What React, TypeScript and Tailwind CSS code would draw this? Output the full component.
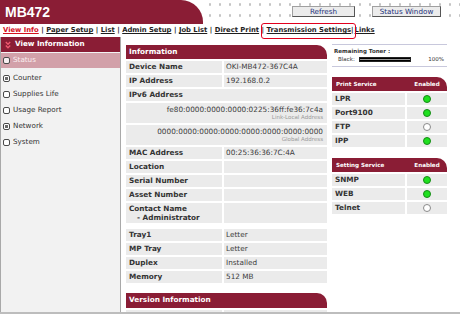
import React from 'react';

const MAROON = 'bg-[#8a1d35]';

const Chevron = () => (
  <svg width="6" height="8" viewBox="0 0 6 8" className="shrink-0">
    <polyline points="0.8,1 3,3.3 5.2,1" fill="none" stroke="#ef5a70" strokeWidth="1.3" />
    <polyline points="0.8,4.5 3,6.8 5.2,4.5" fill="none" stroke="#ef5a70" strokeWidth="1.3" />
  </svg>
);

const NodeIcon = ({ plus, light }: { plus?: boolean; light?: boolean }) => (
  <svg width="7" height="7" viewBox="0 0 7 7" className="shrink-0">
    <rect x="0.5" y="0.5" width="6" height="6" rx="1.5" fill={light ? '#f7eef0' : '#ffffff'} stroke="#4a4a4a" strokeWidth="1" />
    {plus && <rect x="2" y="2" width="3" height="3" fill="#6a6a6a" />}
  </svg>
);

const Dot = ({ on }: { on: boolean }) => (
  <span
    className={
      on
        ? 'block w-[8px] h-[8px] rounded-full bg-[#1fe01f] border border-[#178a17]'
        : 'block w-[8px] h-[8px] rounded-full bg-white border border-[#8a8a8a]'
    }
  />
);

const navItems = ['Paper Setup', 'List', 'Admin Setup', 'Job List', 'Direct Print'];

const sideItems = [
  { label: 'Counter', plus: true },
  { label: 'Supplies Life' },
  { label: 'Usage Report' },
  { label: 'Network', plus: true },
  { label: 'System' },
];

const Row = ({ label, value }: { label: string; value?: string }) => (
  <>
    <div className="h-[12px] bg-[#ebebeb] pl-[3px] leading-[12px] font-bold text-[#333] whitespace-nowrap">{label}</div>
    <div className="h-[12px] bg-[#ebebeb] pl-[2px] leading-[12px] text-[#3c3c3c] whitespace-nowrap">{value}</div>
  </>
);

const ServiceTable = ({ title, rows }: { title: string; rows: [string, boolean][] }) => (
  <div className="grid grid-cols-[73px_1fr] gap-[2px]">
    <div className={`col-span-2 h-[14px] ${MAROON} rounded-tr-[10px] grid grid-cols-[73px_1fr] gap-[2px] items-center text-white font-bold text-[5.6px]`}>
      <span className="pl-[4px]">{title}</span>
      <span className="text-center">Enabled</span>
    </div>
    {rows.map(([name, on]) => (
      <React.Fragment key={name}>
        <div className="h-[12px] bg-[#ebebeb] pl-[3px] leading-[12px] font-bold text-[7.3px] text-[#333]">{name}</div>
        <div className="h-[12px] bg-[#ebebeb] flex items-center justify-center">
          <Dot on={on} />
        </div>
      </React.Fragment>
    ))}
  </div>
);

export default function App() {
  return (
    <div className="w-[460px] h-[314px] overflow-hidden bg-white border-b-2 border-[#bdbdbd] flex flex-col font-['DejaVu_Sans',sans-serif]">
      {/* Header */}
      <div className="h-[24px] flex shrink-0">
        <div className={`w-[203px] ${MAROON} rounded-tr-[22px] pl-[5px] flex items-center`}>
          <span className="text-white font-bold text-[14px] font-['Liberation_Sans',sans-serif] leading-none">MB472</span>
        </div>
        <div className="flex-1 flex items-start pt-[6px] pl-[89px] gap-[17px] bg-[radial-gradient(circle,#c4c4c4_1px,transparent_1.5px)] bg-[length:10px_11px] bg-[position:2px_-1px]">
          <button className="w-[63px] h-[11px] bg-[#ececec] border border-[#a0a0a0] border-b-[#555] border-r-[#555] text-[7.2px] leading-[9px] text-[#23307a]">
            Refresh
          </button>
          <button className="w-[69px] h-[11px] bg-[#ececec] border border-[#a0a0a0] border-b-[#555] border-r-[#555] text-[7.2px] leading-[9px] text-[#23307a]">
            Status Window
          </button>
        </div>
      </div>

      {/* Nav */}
      <div className="h-[13px] shrink-0 relative pl-[3px] flex items-center text-[6.8px] font-bold text-[#1e1e1e] whitespace-nowrap">
        <span className="text-[#d4101e] underline decoration-1 underline-offset-1">View Info</span>
        {navItems.map((item) => (
          <React.Fragment key={item}>
            <span className="px-[2.5px]">|</span>
            <span className="underline decoration-1 underline-offset-1">{item}</span>
          </React.Fragment>
        ))}
        <span className="px-[2.5px]">|</span>
        <span className="underline decoration-1 underline-offset-1">Transmission Settings</span>
        <span>|</span>
        <span className="pl-[1px] underline decoration-1 underline-offset-1">Links</span>
        <div className="absolute left-[261px] top-[-1px] w-[95px] h-[16px] border-[1.5px] border-[#e1001e] rounded-[3px] z-10" />
      </div>

      {/* Body */}
      <div className="flex flex-1 min-h-0">
        {/* Sidebar */}
        <div className="w-[121px] shrink-0 bg-[#f2f2f2] border-l border-r border-[#a9a9a9] text-[7.2px] text-[#333]">
          <div className={`h-[15px] ${MAROON} flex items-center gap-[4px] pl-[4px] text-white font-bold`}>
            <Chevron />
            <span>View Information</span>
          </div>
          <div className="h-[15px] mt-[1px] bg-[#d2a0a9] flex items-center gap-[3px] pl-[2px] text-[#faeef0]">
            <NodeIcon light />
            <span>Status</span>
          </div>
          <div className="pt-[2px]">
            {sideItems.map((s) => (
              <div key={s.label} className="h-[16px] flex items-center gap-[3px] pl-[2px]">
                <NodeIcon plus={s.plus} />
                <span>{s.label}</span>
              </div>
            ))}
          </div>
        </div>

        {/* Main */}
        <div className="flex pl-[5px] pt-[8px] gap-[5px]">
          {/* Information */}
          <div className="w-[201px] text-[7.3px]">
            <div className={`h-[14px] ${MAROON} rounded-tr-[10px] pl-[3px] flex items-center text-white font-bold`}>
              Information
            </div>
            <div className="grid grid-cols-[96px_103px] gap-[2px] mt-[2px]">
              <Row label="Device Name" value="OKI-MB472-367C4A" />
              <Row label="IP Address" value="192.168.0.2" />
              <div className="col-span-2 h-[12px] bg-[#ebebeb] pl-[3px] leading-[12px] font-bold text-[#333]">IPv6 Address</div>
              <div className="col-span-2 h-[20px] bg-[#ebebeb] pr-[4px] flex flex-col items-end justify-center">
                <span className="leading-[9px] text-[#3c3c3c]">fe80:0000:0000:0000:0225:36ff:fe36:7c4a</span>
                <span className="leading-[7px] text-[5.5px] text-[#9a9a9a]">Link-Local Address</span>
              </div>
              <div className="col-span-2 h-[20px] bg-[#ebebeb] pr-[4px] flex flex-col items-end justify-center">
                <span className="leading-[9px] text-[#3c3c3c]">0000:0000:0000:0000:0000:0000:0000:0000</span>
                <span className="leading-[7px] text-[5.5px] text-[#9a9a9a]">Global Address</span>
              </div>
              <Row label="MAC Address" value="00:25:36:36:7C:4A" />
              <Row label="Location" />
              <Row label="Serial Number" />
              <Row label="Asset Number" />
              <div className="h-[20px] bg-[#ebebeb] pl-[3px] font-bold text-[#333] leading-[9px] flex flex-col justify-center">
                <span>Contact Name</span>
                <span className="pl-[8px]">- Administrator</span>
              </div>
              <div className="h-[20px] bg-[#ebebeb]" />
            </div>
            <div className="grid grid-cols-[96px_103px] gap-[2px] mt-[6px]">
              <Row label="Tray1" value="Letter" />
              <Row label="MP Tray" value="Letter" />
              <Row label="Duplex" value="Installed" />
              <Row label="Memory" value="512 MB" />
            </div>
            <div className={`h-[15px] mt-[10px] ${MAROON} rounded-tr-[10px] pl-[3px] flex items-center text-white font-bold`}>
              Version Information
            </div>
            <div className="grid grid-cols-[96px_103px] gap-[2px] mt-[2px]">
              <Row label="Firmware Version" value="A00.07.0.4" />
            </div>
          </div>

          {/* Right column */}
          <div className="w-[115px] -mt-[1px]">
            <div className="h-[23px] border-t border-b border-[#c8c8dc] pl-[2px] pt-[2px] text-[5.5px] text-[#333]">
              <div className="font-bold leading-[8px]">Remaining Toner :</div>
              <div className="flex items-center h-[8px] pl-[4px]">
                <span className="w-[21px]">Black:</span>
                <span className="w-[52px] h-[5px] border border-[#222] bg-[linear-gradient(#000,#000_25%,#9a9a9a_50%,#000_75%,#000)]" />
                <span className="ml-auto pr-[3px]">100%</span>
              </div>
            </div>
            <div className="mt-[10px]">
              <ServiceTable
                title="Print Service"
                rows={[
                  ['LPR', true],
                  ['Port9100', true],
                  ['FTP', false],
                  ['IPP', true],
                ]}
              />
            </div>
            <div className="mt-[11px]">
              <ServiceTable
                title="Setting Service"
                rows={[
                  ['SNMP', true],
                  ['WEB', true],
                  ['Telnet', false],
                ]}
              />
            </div>
          </div>
        </div>
      </div>
    </div>
  );
}
